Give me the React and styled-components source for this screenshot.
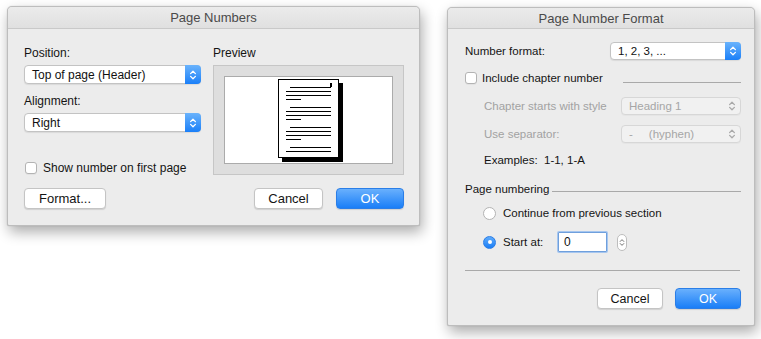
import React from 'react';
import styled, { createGlobalStyle, css } from 'styled-components';

const Global = createGlobalStyle`
  html, body { margin: 0; padding: 0; background: #ffffff; }
  body {
    font-family: "Liberation Sans", Arial, Helvetica, sans-serif;
    font-size: 12px;
    color: #141414;
  }
  * { box-sizing: border-box; }
`;

const Canvas = styled.div`
  display: flex;
  align-items: flex-start;
  gap: 27px;
  padding: 6px 0 0 7px;
  width: 761px;
  height: 339px;
  overflow: hidden;
`;

const Dialog = styled.div`
  width: ${(p) => p.$w}px;
  height: ${(p) => p.$h}px;
  margin-top: ${(p) => p.$mt || 0}px;
  background: #ececec;
  border: 1px solid #bdbdbd;
  border-radius: 5px 5px 2px 2px;
  box-shadow: 2px 6px 14px rgba(0, 0, 0, 0.33), 0 0 1px rgba(0, 0, 0, 0.25);
  display: flex;
  flex-direction: column;
  overflow: hidden;
`;

const TitleBar = styled.div`
  height: ${(p) => p.$h || 22}px;
  flex: none;
  border-bottom: 1px solid #c9c9c9;
  background: linear-gradient(#ebebeb, #e0e0e0);
  display: flex;
  align-items: center;
  justify-content: center;
  font-size: 13px;
  color: #4a4a4a;
`;

const LeftBody = styled.div`
  display: flex;
  flex-direction: column;
  padding: 16px 15px 0 16px;
`;

const TopSection = styled.div`
  display: flex;
  gap: 12px;
`;

const Column = styled.div`
  width: ${(p) => p.$w}px;
  display: flex;
  flex-direction: column;
`;

const Label = styled.div`
  line-height: 16px;
  height: 16px;
  margin-top: ${(p) => p.$mt || 0}px;
  font-size: ${(p) => p.$fs || 12}px;
  color: ${(p) => (p.$muted ? '#a2a2a2' : '#141414')};
  white-space: nowrap;
  ${(p) => p.$w && css`width: ${p.$w}px; flex: none;`}
`;

const SelectBox = styled.div`
  width: ${(p) => p.$w}px;
  height: ${(p) => p.$h || 19}px;
  margin-top: ${(p) => p.$mt || 0}px;
  ${(p) => p.$push && css`margin-left: auto;`}
  flex: none;
  display: flex;
  align-items: center;
  background: ${(p) => (p.$disabled ? '#f1f1f1' : '#ffffff')};
  border: 1px solid ${(p) => (p.$disabled ? '#d7d7d7' : '#c3c3c3')};
  border-radius: 4px;
  box-shadow: 0 1px 1px rgba(0, 0, 0, ${(p) => (p.$disabled ? 0.03 : 0.08)});
  color: ${(p) => (p.$disabled ? '#a6a6a6' : '#111111')};
  font-size: ${(p) => p.$fs || 12}px;
  padding-left: 7px;
`;

const SelectText = styled.span`
  flex: 1;
  white-space: pre;
`;

const BlueStepper = styled.span`
  width: 16px;
  align-self: stretch;
  margin: -1px -1px -1px 0;
  border-radius: 0 4px 4px 0;
  background: linear-gradient(#6ab3fc, #1a7ff8);
  display: flex;
  align-items: center;
  justify-content: center;
`;

const PlainStepper = styled.span`
  width: 16px;
  align-self: stretch;
  display: flex;
  align-items: center;
  justify-content: center;
`;

const Chevrons = ({ color = '#fff', w = 8, h = 12 }) => (
  <svg width={w} height={h} viewBox="0 0 8 12">
    <path d="M1.6 4.6 L4 2.2 L6.4 4.6" fill="none" stroke={color} strokeWidth="1.3" strokeLinecap="round" strokeLinejoin="round" />
    <path d="M1.6 7.4 L4 9.8 L6.4 7.4" fill="none" stroke={color} strokeWidth="1.3" strokeLinecap="round" strokeLinejoin="round" />
  </svg>
);

const Select = ({ w, h, mt, fs, disabled, push, children }) => (
  <SelectBox $w={w} $h={h} $mt={mt} $fs={fs} $disabled={disabled} $push={push}>
    <SelectText>{children}</SelectText>
    {disabled ? (
      <PlainStepper>
        <Chevrons color="#a9a9a9" />
      </PlainStepper>
    ) : (
      <BlueStepper>
        <Chevrons />
      </BlueStepper>
    )}
  </SelectBox>
);

const CheckRow = styled.div`
  display: flex;
  align-items: center;
  gap: 6px;
  margin-top: auto;
  padding-left: 1px;
  height: 14px;
`;

const Checkbox = styled.span`
  width: 12px;
  height: 12px;
  flex: none;
  border: 1px solid #b3b3b3;
  border-radius: 3px;
  background: #ffffff;
  box-shadow: 0 1px 0 rgba(0, 0, 0, 0.04);
`;

const Radio = styled.span`
  width: 13px;
  height: 13px;
  flex: none;
  border-radius: 50%;
  display: flex;
  align-items: center;
  justify-content: center;
  ${(p) =>
    p.$on
      ? css`
          background: linear-gradient(#5fabfb, #1b7ef6);
          border: 1px solid #2a7de6;
        `
      : css`
          background: #ffffff;
          border: 1px solid #b3b3b3;
        `}
`;

const RadioDot = styled.span`
  width: 4px;
  height: 4px;
  border-radius: 50%;
  background: #ffffff;
`;

const PreviewFrame = styled.div`
  width: 191px;
  height: 110px;
  margin-top: 4px;
  background: #dedede;
  border: 1px solid #c6c6c6;
  padding: 10px;
  display: flex;
`;

const PreviewPaper = styled.div`
  flex: 1;
  background: #ffffff;
  border: 1px solid #ababab;
  display: flex;
  align-items: center;
  justify-content: center;
`;

const PageSvg = styled.svg`
  margin-left: 4px;
  margin-top: 2px;
`;

const PageIcon = () => {
  const lines = [];
  const paras = [8, 28, 48, 68];
  paras.forEach((y0, pi) => {
    const count = pi === 3 ? 2 : 4;
    for (let i = 0; i < count; i++) {
      const y = y0 + i * 4 + 0.5;
      const x1 = i === 0 ? 12 : 8;
      const x2 = i === 3 ? 23 : 53;
      lines.push(<line key={`${pi}-${i}`} x1={x1} y1={y} x2={x2} y2={y} stroke="#000" strokeWidth="1" />);
    }
  });
  return (
    <PageSvg width="66" height="84" viewBox="0 0 66 84">
      <rect x="4" y="4" width="61" height="79" fill="#000" />
      <rect x="0.5" y="0.5" width="60" height="78" fill="#fff" stroke="#000" strokeWidth="1" />
      <rect x="52" y="4" width="2" height="4" fill="#000" />
      {lines}
    </PageSvg>
  );
};

const ButtonRow = styled.div`
  display: flex;
  align-items: center;
  gap: ${(p) => p.$gap || 12}px;
  justify-content: ${(p) => p.$justify || 'flex-start'};
  margin-top: ${(p) => p.$mt || 0}px;
`;

const Spacer = styled.div`
  flex: 1;
`;

const Button = styled.button`
  width: ${(p) => p.$w}px;
  height: 21px;
  padding: 0;
  border-radius: 4px;
  font-family: "Liberation Sans", Arial, Helvetica, sans-serif;
  font-size: ${(p) => p.$fs || 13}px;
  box-shadow: 0 1px 1px rgba(0, 0, 0, 0.12);
  ${(p) =>
    p.$primary
      ? css`
          background: linear-gradient(#69b0fd, #1a7ef7);
          border: 1px solid #2b7ee7;
          color: #ffffff;
        `
      : css`
          background: #ffffff;
          border: 1px solid #c4c4c4;
          color: #141414;
        `}
`;

/* right dialog */
const RightBody = styled.div`
  display: flex;
  flex-direction: column;
  padding: 12px 13px 0 17px;
  font-size: 11.5px;
`;

const Row = styled.div`
  display: flex;
  align-items: center;
  height: 20px;
  margin-top: ${(p) => p.$mt || 0}px;
  padding-left: ${(p) => p.$indent || 0}px;
  gap: ${(p) => p.$gap || 0}px;
`;

const Rule = styled.div`
  height: 1px;
  background: #a9a9a9;
  ${(p) =>
    p.$w
      ? css`
          width: ${p.$w}px;
          flex: none;
          margin-left: auto;
        `
      : css`
          flex: 1;
          margin-left: ${p.$ml || 0}px;
        `}
  margin-top: ${(p) => (p.$dy || 0) * 2}px;
`;

const Separator = styled.div`
  height: 1px;
  background: #a9a9a9;
  margin-top: ${(p) => p.$mt || 0}px;
  margin-right: 1px;
`;

const NumberInput = styled.div`
  width: 49px;
  height: 20px;
  flex: none;
  background: #ffffff;
  border: 1px solid #6f9fdc;
  box-shadow: 0 0 0 1px #a6c6ef;
  border-radius: 1px;
  display: flex;
  align-items: center;
  padding-left: 5px;
  font-size: 12px;
  color: #111111;
`;

const SmallStepper = styled.div`
  width: 10px;
  height: 17px;
  flex: none;
  margin-left: 3px;
  border: 1px solid #bdbdbd;
  border-radius: 5px;
  background: #ffffff;
  display: flex;
  align-items: center;
  justify-content: center;
`;

export default function App() {
  return (
    <>
      <Global />
      <Canvas>
        <Dialog $w={413} $h={220}>
          <TitleBar>Page Numbers</TitleBar>
          <LeftBody>
            <TopSection>
              <Column $w={177}>
                <Label>Position:</Label>
                <Select w={177} mt={4}>Top of page (Header)</Select>
                <Label $mt={9}>Alignment:</Label>
                <Select w={177} mt={4}>Right</Select>
                <CheckRow>
                  <Checkbox />
                  <Label>Show number on first page</Label>
                </CheckRow>
              </Column>
              <Column $w={191}>
                <Label>Preview</Label>
                <PreviewFrame>
                  <PreviewPaper>
                    <PageIcon />
                  </PreviewPaper>
                </PreviewFrame>
              </Column>
            </TopSection>
            <ButtonRow $mt={13} $gap={13}>
              <Button $w={82}>Format...</Button>
              <Spacer />
              <Button $w={69}>Cancel</Button>
              <Button $w={68} $primary>OK</Button>
            </ButtonRow>
          </LeftBody>
        </Dialog>

        <Dialog $w={308} $h={319} $mt={1}>
          <TitleBar $h={21}>Page Number Format</TitleBar>
          <RightBody>
            <Row>
              <Label $fs={11.5}>Number format:</Label>
              <Select w={131} h={18} fs={11.5} push>1, 2, 3, ...</Select>
            </Row>
            <Row $mt={7} $gap={5}>
              <Checkbox />
              <Label $fs={11.5}>Include chapter number</Label>
              <Rule $w={118} $dy={4} />
            </Row>
            <Row $mt={8} $indent={19}>
              <Label $fs={11.5} $muted>Chapter starts with style</Label>
              <Select w={120} h={18} fs={11.5} disabled push>Heading 1</Select>
            </Row>
            <Row $mt={8} $indent={19}>
              <Label $fs={11.5} $muted>Use separator:</Label>
              <Select w={120} h={18} fs={11.5} disabled push>{'-     (hyphen)'}</Select>
            </Row>
            <Row $mt={6} $indent={19}>
              <Label $fs={11.5} $w={60}>Examples:</Label>
              <Label $fs={11.5}>1-1, 1-A</Label>
            </Row>
            <Row $mt={9}>
              <Label $fs={11.5}>Page numbering</Label>
              <Rule $ml={3} $dy={2} />
            </Row>
            <Row $mt={4} $indent={18} $gap={7}>
              <Radio />
              <Label $fs={11.5}>Continue from previous section</Label>
            </Row>
            <Row $mt={9} $indent={18} $gap={7}>
              <Radio $on>
                <RadioDot />
              </Radio>
              <Label $fs={11.5} $w={48}>Start at:</Label>
              <NumberInput>0</NumberInput>
              <SmallStepper>
                <Chevrons color="#6b6b6b" w={6} h={11} />
              </SmallStepper>
            </Row>
            <Separator $mt={18} />
            <ButtonRow $mt={17} $justify="flex-end" $gap={12}>
              <Button $w={66} $fs={12.5}>Cancel</Button>
              <Button $w={66} $fs={12.5} $primary>OK</Button>
            </ButtonRow>
          </RightBody>
        </Dialog>
      </Canvas>
    </>
  );
}
